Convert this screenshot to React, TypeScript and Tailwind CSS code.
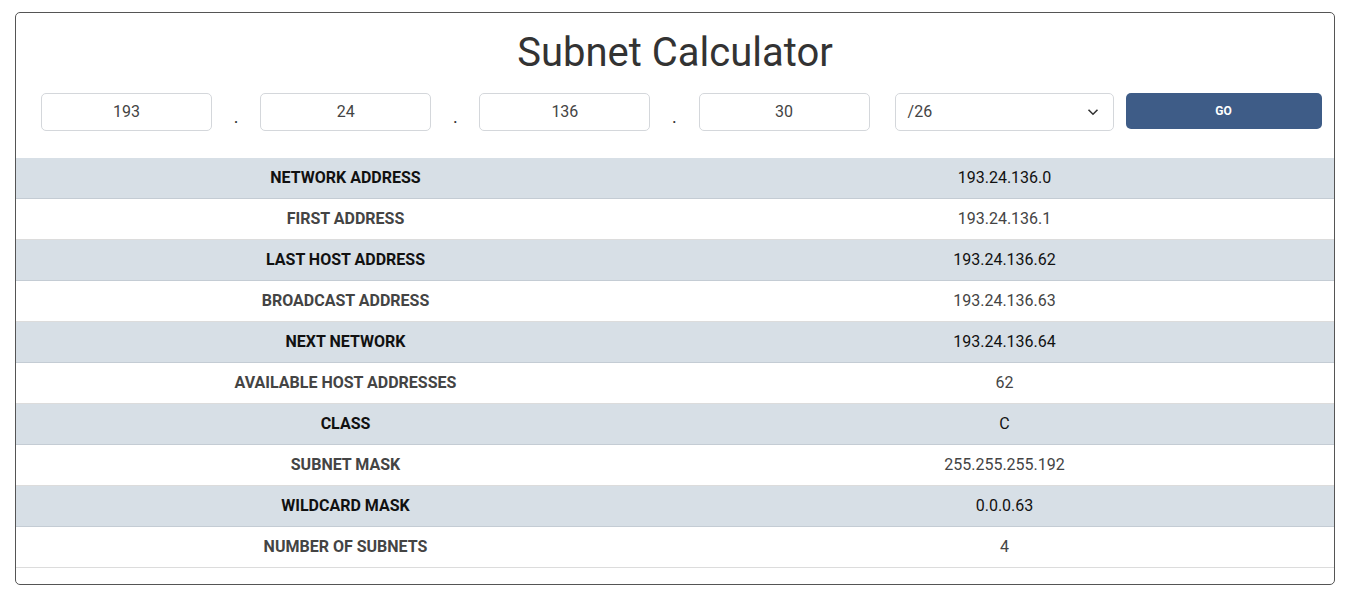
import React from "react";

const rows: [string, string][] = [
  ["NETWORK ADDRESS", "193.24.136.0"],
  ["FIRST ADDRESS", "193.24.136.1"],
  ["LAST HOST ADDRESS", "193.24.136.62"],
  ["BROADCAST ADDRESS", "193.24.136.63"],
  ["NEXT NETWORK", "193.24.136.64"],
  ["AVAILABLE HOST ADDRESSES", "62"],
  ["CLASS", "C"],
  ["SUBNET MASK", "255.255.255.192"],
  ["WILDCARD MASK", "0.0.0.63"],
  ["NUMBER OF SUBNETS", "4"],
];

function Octet({ v }: { v: string }) {
  return (
    <div className="w-[171px] h-[38px] rounded-[5px] border border-[#d4d7db] flex items-center justify-center text-[16px] text-[#444]">
      {v}
    </div>
  );
}

function Dot() {
  return <div className="w-[48.2px] h-[38px] flex justify-center pt-[10px] text-[18px] leading-[28px] text-[#333]">.</div>;
}

export default function App() {
  return (
    <div className="bg-white w-[1348px] h-[597px] pt-[12px] px-[15px]" style={{ fontFamily: "Roboto, 'Liberation Sans', sans-serif" }}>
      <div className="w-[1320px] h-[573px] border border-[#555] rounded-[5px] overflow-hidden">
        <h1 className="text-center text-[40px] leading-[48px] text-[#333] mt-[16px]">Subnet Calculator</h1>
        <div className="flex items-start h-[38px] mt-[16px] pl-[25px]">
          <Octet v="193" />
          <Dot />
          <Octet v="24" />
          <Dot />
          <Octet v="136" />
          <Dot />
          <Octet v="30" />
          <div className="ml-[25px] w-[219px] h-[38px] rounded-[5px] border border-[#d4d7db] flex items-center justify-between pl-[12px] pr-[14px] text-[16px] text-[#444]">
            <span>/26</span>
            <svg width="12" height="8" viewBox="0 0 12 8" fill="none" stroke="#333" strokeWidth="1.6">
              <path d="M1.5 1.8 6 6.2 10.5 1.8" />
            </svg>
          </div>
          <button className="ml-[12px] w-[196px] h-[36px] rounded-[5px] bg-[#3e5c87] text-white text-[12px] font-bold">GO</button>
        </div>
        <div className="mt-[27px]">
          {rows.map(([k, v], i) => {
            const shaded = i % 2 === 0;
            return (
              <div
                key={k}
                className={`flex h-[41px] items-center border-b ${shaded ? "bg-[#d7dfe6] border-[#c4ccd4] text-[#111]" : "bg-white border-[#dcdcdc] text-[#444]"}`}
              >
                <div className="w-1/2 text-center text-[16px] font-bold">{k}</div>
                <div className="w-1/2 text-center text-[16px] font-normal">{v}</div>
              </div>
            );
          })}
        </div>
      </div>
    </div>
  );
}
